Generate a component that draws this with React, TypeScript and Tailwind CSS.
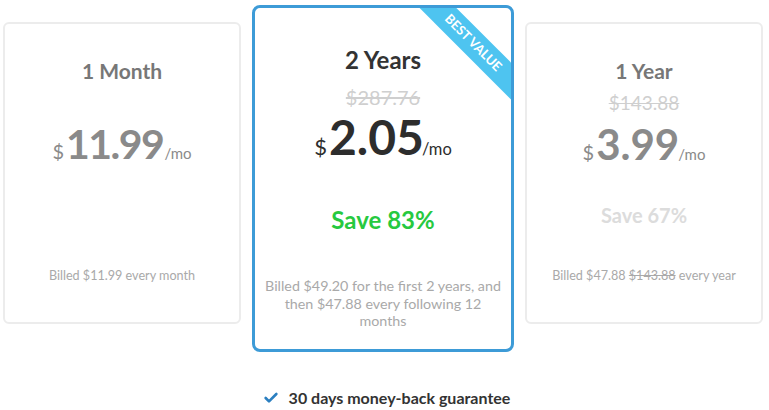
import { Check } from 'lucide-react'

type Plan = {
  title: string
  oldPrice?: string
  price: string
  save?: string
  billed: React.ReactNode
}

const side: Plan[] = [
  {
    title: '1 Month',
    price: '11.99',
    billed: 'Billed $11.99 every month',
  },
  {
    title: '1 Year',
    oldPrice: '$143.88',
    price: '3.99',
    save: 'Save 67%',
    billed: (
      <>
        Billed $47.88 <span className="line-through">$143.88</span> every year
      </>
    ),
  },
]

function SideCard({ plan }: { plan: Plan }) {
  return (
    <div className="mt-[22px] flex h-[302px] w-[238px] shrink-0 flex-col items-center rounded-[6px] border-2 border-[#ececec] bg-white pt-[34px] text-center">
      <div className="text-[21px] font-bold leading-[25px] text-[#777]">{plan.title}</div>
      <div className={`mt-[8px] text-[19px] leading-[24px] text-[#cfcfcf] line-through ${plan.oldPrice ? '' : 'invisible'}`}>
        {plan.oldPrice ?? '$0'}
      </div>
      <div className="mt-[8px] flex h-[42px] items-baseline leading-[42px] text-[#8a8a8a]">
        <span className="mr-[2px] text-[20px] leading-none">$</span>
        <span className={`font-bold ${plan.price.startsWith('1') ? 'text-[41px] tracking-[-1.5px]' : 'text-[42px]'}`}>{plan.price}</span>
        <span className={`text-[15px] leading-none ${plan.price.startsWith('1') ? 'ml-[1px]' : '-ml-[1px]'}`}>/mo</span>
      </div>
      <div className={`mt-[38px] text-[20px] font-bold leading-[24px] text-[#dcdcdc] ${plan.save ? '' : 'invisible'}`}>
        {plan.save ?? 'Save'}
      </div>
      <div className="mt-[40px] text-[12.6px] leading-[18px] text-[#a9a9a9]">{plan.billed}</div>
    </div>
  )
}

export default function App() {
  return (
    <div className="h-[410px] w-[769px] overflow-hidden bg-white font-['Lato',sans-serif]">
      <div className="flex items-start pl-[3px]">
        <SideCard plan={side[0]} />

        <div className="relative ml-[11px] mt-[5px] flex h-[347px] w-[262px] shrink-0 flex-col items-center overflow-hidden rounded-[8px] border-[3px] border-[#3d9bd7] bg-white pt-[38px] text-center">
          <div className="absolute left-[108px] top-[22px] flex h-[26px] w-[220px] rotate-45 items-center justify-center bg-[#4ec4f0] text-[13px] font-bold uppercase text-white">
            Best Value
          </div>
          <div className="text-[24px] font-bold leading-[28px] text-[#333]">2 Years</div>
          <div className="mt-[11px] text-[20px] leading-[24px] text-[#cfcfcf] line-through">$287.76</div>
          <div className="mt-[4px] flex h-[48px] items-baseline leading-[48px] text-[#2d2d2d]">
            <span className="mr-[2px] text-[22px] leading-none">$</span>
            <span className="text-[48px] font-bold">2.05</span>
            <span className="-ml-[2px] text-[16.5px] leading-none">/mo</span>
          </div>
          <div className="mt-[45px] text-[24px] font-bold leading-[28px] text-[#27c93f]">Save 83%</div>
          <div className="mt-[43px] w-[238px] text-[14.3px] leading-[17.5px] text-[#a9a9a9]">
            Billed $49.20 for the first 2 years, and then $47.88 every following 12 months
          </div>
        </div>

        <div className="ml-[11px]">
          <SideCard plan={side[1]} />
        </div>
      </div>

      <div className="mt-[36px] flex items-center justify-center gap-[10px] pl-[4px]">
        <Check className="h-[16px] w-[16px] text-[#2b7fc0]" strokeWidth={4} />
        <span className="text-[16px] font-bold leading-[20px] text-[#333]">30 days money-back guarantee</span>
      </div>
    </div>
  )
}
